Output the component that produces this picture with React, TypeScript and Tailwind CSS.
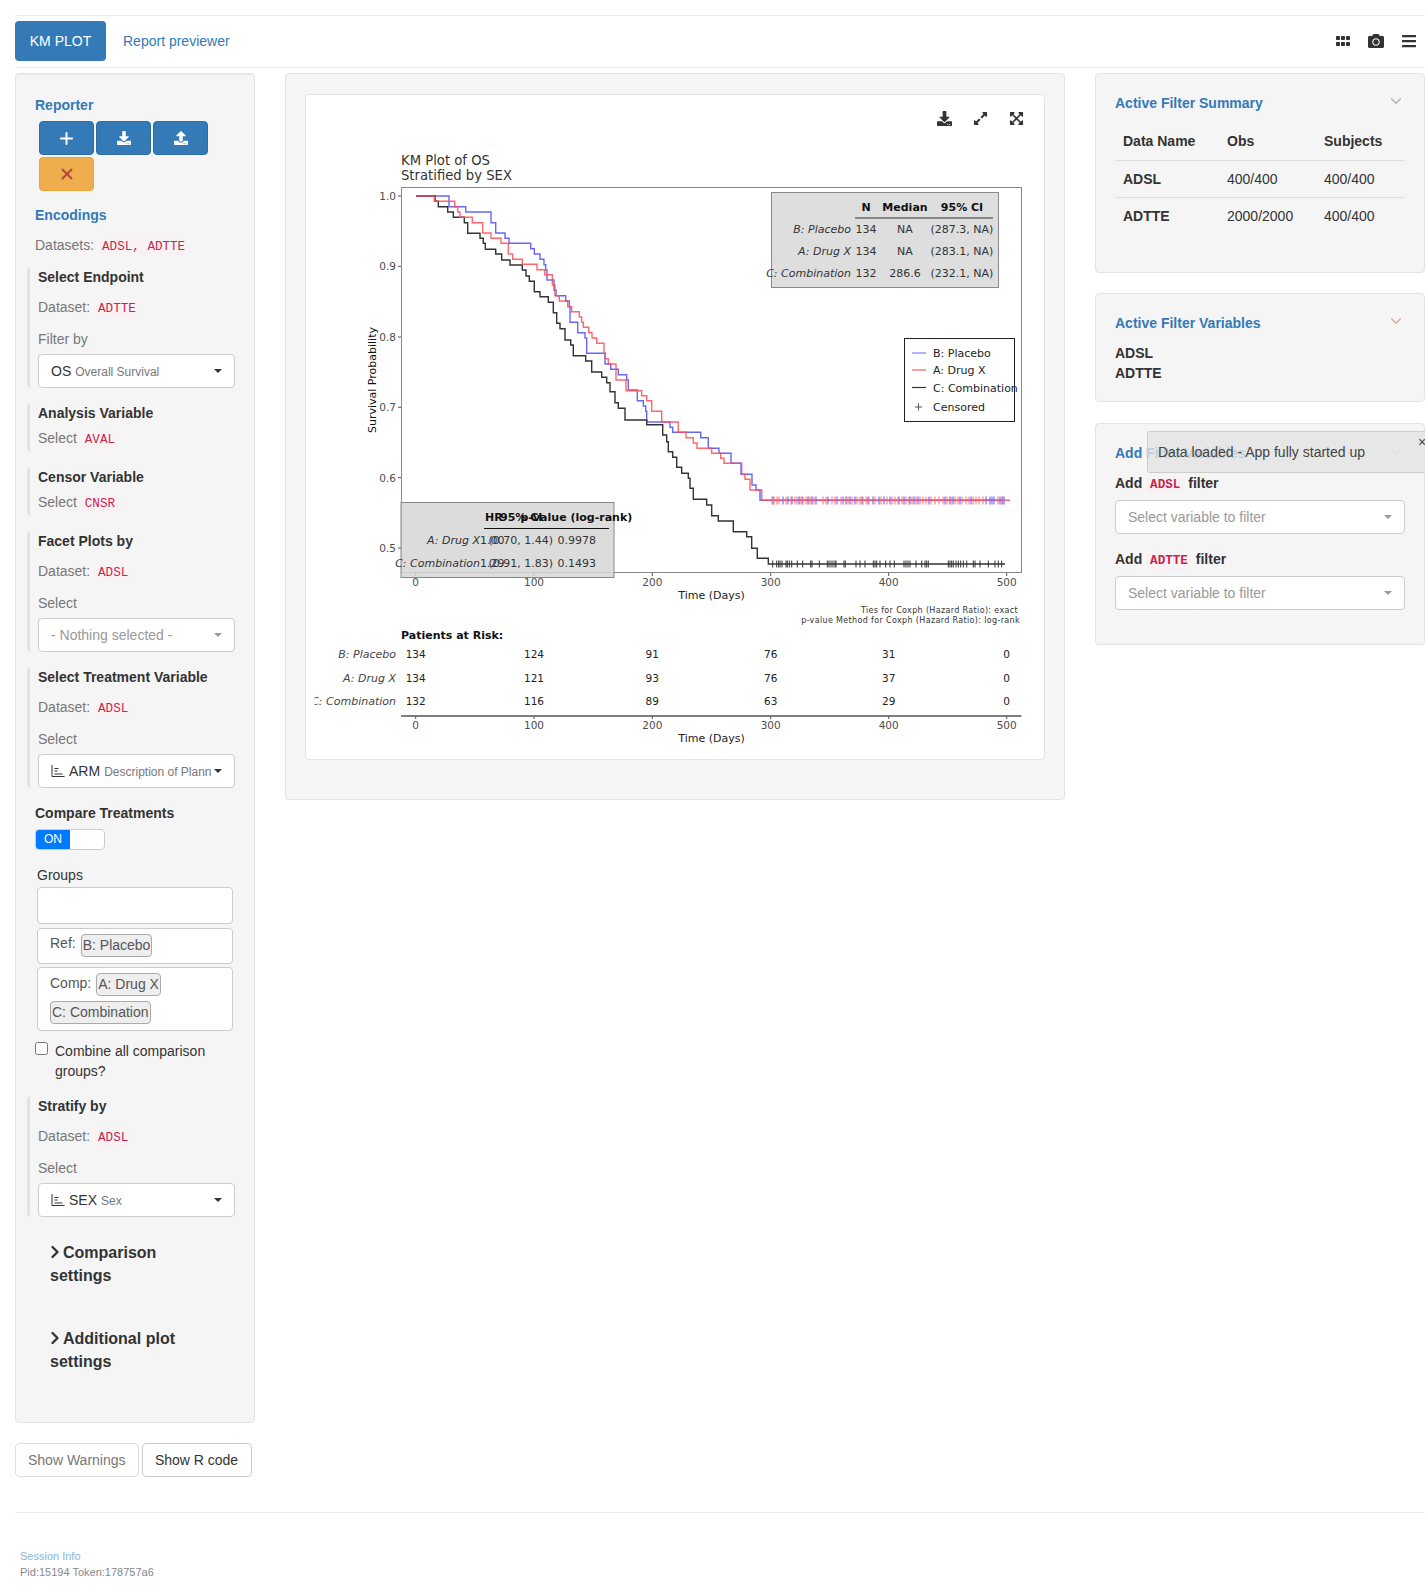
import React from "react";
import { ChevronDown, ChevronRight, Plus, X } from "lucide-react";
import {
  FaBars,
  FaCamera,
  FaDownload,
  FaExpandAlt,
  FaExpandArrowsAlt,
  FaGripHorizontal,
  FaUpload,
} from "react-icons/fa";

const Code = ({ children, bold }: { children: React.ReactNode; bold?: boolean }) => (
  <code
    className={`rounded-[4px] bg-[#f9f2f4] px-[4px] py-[2px] font-['Liberation_Mono',monospace] text-[12.6px] leading-[1] text-[#c7254e] ${
      bold ? "font-bold" : ""
    }`}
  >
    {children}
  </code>
);

const Caret = ({ muted }: { muted?: boolean }) => (
  <span
    className={`h-0 w-0 shrink-0 border-x-4 border-t-4 border-x-transparent ${
      muted ? "border-t-[#999]" : "border-t-[#333]"
    }`}
  />
);

const Select = ({ children, muted }: { children: React.ReactNode; muted?: boolean }) => (
  <div className="flex h-[34px] items-center justify-between rounded-[4px] border border-[#ccc] bg-white pl-[12px] pr-[12px]">
    <div className="flex min-w-0 items-baseline overflow-hidden whitespace-nowrap">{children}</div>
    <Caret muted={muted} />
  </div>
);

const Group = ({ title, children, className }: { title: string; children: React.ReactNode; className?: string }) => (
  <div className={`-ml-2 rounded-l-[4px] border-l-[3px] border-[#e3e3e3] pl-[8px] ${className ?? ""}`}>
    <div className="font-bold">{title}</div>
    {children}
  </div>
);

const Muted = ({ children, className }: { children: React.ReactNode; className?: string }) => (
  <div className={`text-[#777] ${className ?? ""}`}>{children}</div>
);

// axis with three bars, the picker's marker for a factor variable
const VarIcon = () => (
  <svg width="14" height="14" viewBox="0 0 14 14" className="mr-[4px] shrink-0 self-center" fill="none" stroke="#333">
    <path d="M1 1v11.5h12.5" />
    <path d="M3.5 4.5h4M3.5 7h3M3.5 10h8" />
  </svg>
);

const Chip = ({ children }: { children: React.ReactNode }) => (
  <span className="inline-block h-[23px] whitespace-nowrap rounded-[4px] border border-[#aaa] bg-[#eee] px-[1px] leading-[21px] text-[#555]">
    {children}
  </span>
);

const SectionToggle = ({ children, className }: { children: React.ReactNode; className?: string }) => (
  <div className={`ml-[15px] w-[150px] text-[16px] font-bold leading-[23px] ${className ?? ""}`}>
    <ChevronRight className="-ml-[5px] -mr-[2px] inline-block h-[20px] align-[-4px]" size={20} strokeWidth={2.8} />
    {children}
  </div>
);

function Sidebar() {
  return (
    <div>
      <div className="rounded-[4px] border border-[#e3e3e3] bg-[#f5f5f5] pb-[49px] pl-[19px] pr-[19px] pt-[21px] shadow-[inset_0_1px_1px_rgba(0,0,0,0.05)]">
        <div className="font-bold text-[#337ab7]">Reporter</div>
        <div className="ml-1 mt-[6px] flex flex-wrap gap-[2px]">
          <button className="flex h-[34px] w-[55px] items-center justify-center rounded-[4px] border border-[#2e6da4] bg-[#337ab7] text-white">
            <Plus size={19} strokeWidth={2.5} />
          </button>
          <button className="flex h-[34px] w-[55px] items-center justify-center rounded-[4px] border border-[#2e6da4] bg-[#337ab7] text-white">
            <FaDownload className="text-[14px]" />
          </button>
          <button className="flex h-[34px] w-[55px] items-center justify-center rounded-[4px] border border-[#2e6da4] bg-[#337ab7] text-white">
            <FaUpload className="text-[14px]" />
          </button>
          <button className="flex h-[34px] w-[55px] items-center justify-center rounded-[4px] border border-[#eea236] bg-[#f0ad4e] text-[#b0473f]">
            <X size={18} strokeWidth={2.5} />
          </button>
        </div>
        <div className="mt-[14px] font-bold text-[#337ab7]">Encodings</div>
        <Muted className="mt-[10px]">
          Datasets: <Code>ADSL, ADTTE</Code>
        </Muted>

        <Group title="Select Endpoint" className="mt-[12px]">
          <Muted className="mt-[10px]">
            Dataset: <Code>ADTTE</Code>
          </Muted>
          <Muted className="mt-[12px]">Filter by</Muted>
          <div className="mt-[5px]">
            <Select>
              <span>OS</span>
              <span className="ml-[4px] text-[12px] text-[#777]">Overall Survival</span>
            </Select>
          </div>
        </Group>

        <Group title="Analysis Variable" className="mt-[15px] pb-[4px]">
          <Muted className="mt-[5px]">
            Select <Code>AVAL</Code>
          </Muted>
        </Group>

        <Group title="Censor Variable" className="mt-[15px] pb-[4px]">
          <Muted className="mt-[5px]">
            Select <Code>CNSR</Code>
          </Muted>
        </Group>

        <Group title="Facet Plots by" className="mt-[15px]">
          <Muted className="mt-[10px]">
            Dataset: <Code>ADSL</Code>
          </Muted>
          <Muted className="mt-[12px]">Select</Muted>
          <div className="mt-[5px]">
            <Select muted>
              <span className="text-[#999]">- Nothing selected -</span>
            </Select>
          </div>
        </Group>

        <Group title="Select Treatment Variable" className="mt-[15px]">
          <Muted className="mt-[10px]">
            Dataset: <Code>ADSL</Code>
          </Muted>
          <Muted className="mt-[12px]">Select</Muted>
          <div className="mt-[5px]">
            <Select>
              <VarIcon />
              <span>ARM</span>
              <span className="ml-[4px] text-[12px] text-[#777]">Description of Plann</span>
            </Select>
          </div>
        </Group>

        <div className="mt-[15px] font-bold">Compare Treatments</div>
        <div className="mt-[6px] flex h-[21px] w-[70px] overflow-hidden rounded-[4px] border border-[#ccc] bg-white text-[12px] leading-[19px] text-white">
          <span className="w-[34px] bg-[#007bff] text-center">ON</span>
        </div>

        <div className="ml-[2px] mr-[2px] mt-[15px]">
          <div>Groups</div>
          <div className="mt-[2px] h-[37px] rounded-[4px] border border-[#ccc] bg-white" />
          <div className="mt-[4px] flex h-[36px] items-start gap-[5px] rounded-[4px] border border-[#ccc] bg-white pl-[12px] pt-[5px] text-[#555]">
            <span className="leading-[19px]">Ref:</span>
            <Chip>B: Placebo</Chip>
          </div>
          <div className="mt-[3px] h-[64px] rounded-[4px] border border-[#ccc] bg-white pl-[12px] pt-[5px] text-[#555]">
            <div className="flex items-start gap-[5px]">
              <span className="leading-[20px]">Comp:</span>
              <Chip>A: Drug X</Chip>
            </div>
            <div className="mt-[5px]">
              <Chip>C: Combination</Chip>
            </div>
          </div>
        </div>

        <label className="mt-[10px] flex items-start">
          <input type="checkbox" className="mt-[1px] h-[13px] w-[13px] shrink-0" />
          <span className="ml-[7px]">Combine all comparison groups?</span>
        </label>

        <Group title="Stratify by" className="mt-[15px]">
          <Muted className="mt-[10px]">
            Dataset: <Code>ADSL</Code>
          </Muted>
          <Muted className="mt-[12px]">Select</Muted>
          <div className="mt-[5px]">
            <Select>
              <VarIcon />
              <span>SEX</span>
              <span className="ml-[4px] text-[12px] text-[#777]">Sex</span>
            </Select>
          </div>
        </Group>

        <SectionToggle className="mt-[24px]">Comparison settings</SectionToggle>
        <SectionToggle className="mt-[40px]">Additional plot settings</SectionToggle>
      </div>
      <div className="mt-[20px] flex gap-[3px]">
        <button className="h-[34px] rounded-[4px] border border-[#ddd] bg-white px-[12px] text-[#777]">
          Show Warnings
        </button>
        <button className="h-[34px] w-[110px] rounded-[4px] border border-[#ccc] bg-white text-[#333]">
          Show R code
        </button>
      </div>
    </div>
  );
}

type Pt = [number, number];

// step corners in page coordinates: run across to x, then drop to y
const bluePts: Pt[] = [
  [449, 206.7], [465.7, 212], [491, 222.7], [495.7, 233], [505, 238.3], [509, 243.3], [530.7, 248.7],
  [534.3, 254], [540, 259.3], [544, 264.7], [545.7, 270], [547, 280], [554, 290], [556, 295.7],
  [565.7, 301], [569.3, 306.7], [570, 322.3], [577.7, 332.7], [585, 338], [586.7, 353.3], [605, 364],
  [610.7, 369.3], [618.3, 374.7], [626.7, 380], [628.3, 390], [637.3, 400.7], [643.3, 406],
  [645.7, 411.3], [646.7, 422], [670, 427.3], [672.7, 432.3], [700.7, 437.7], [708.3, 448.3],
  [719, 453.3], [731, 463.3], [741, 474.3], [752, 485], [756, 490], [760, 500.3],
];
const redPts: Pt[] = [
  [434.3, 201.3], [454.7, 206.7], [457.7, 212], [460, 217.3], [472.3, 222.7], [482.7, 233],
  [491, 238.3], [501, 243.3], [508.3, 254], [512.7, 259.3], [522.3, 264.3], [537, 269.7],
  [544.7, 274.7], [552.3, 285], [555, 295.7], [559.3, 301], [567.7, 306.7], [571.7, 311.7],
  [579.3, 317], [581.7, 322.3], [583.3, 327.3], [588.7, 332.7], [592, 338], [596.7, 343.3],
  [604, 353.3], [605.3, 358.7], [608.3, 364], [616, 380], [626, 390.7], [641.7, 395.7],
  [646.7, 400.7], [651.7, 411.3], [661.7, 422], [678.3, 432.3], [686, 437.7], [693.3, 443],
  [697, 448.3], [711.7, 453.3], [720.7, 458.3], [724, 463.3], [741.7, 474.3], [745, 479.3],
  [750, 490], [761.7, 500.3],
];
const blackPts: Pt[] = [
  [435, 201.3], [438.3, 206.7], [447.7, 212], [453.3, 217.3], [464.3, 222.7], [467.7, 233.3],
  [480, 238.3], [483.3, 243.3], [485.3, 249.3], [495.7, 254], [501.7, 260], [510, 265],
  [522.3, 270], [526, 276], [529.3, 281.3], [534.3, 291.7], [540, 296.7], [548.3, 302.3],
  [553.3, 312.7], [556.7, 323.3], [560, 328.7], [565, 340], [570.7, 345], [573.3, 355.7],
  [585.7, 361], [591.7, 372], [601.7, 377.3], [606.7, 382.7], [610, 391.7], [615, 402.7],
  [618.3, 408.3], [625, 420], [646.7, 424.7], [662.7, 435], [666.7, 441.7], [668.3, 451.7],
  [672.7, 457.3], [676.7, 467.3], [681.7, 473.3], [688.3, 478.3], [690, 488.3], [693.3, 499.3],
  [706.7, 505], [711.7, 515.7], [718.3, 521], [733.3, 531.7], [746.7, 536.7], [751.7, 548.3],
  [757.3, 558.3], [768.3, 564],
];

const redTicks = [
  772, 774, 777, 779, 786, 791, 795, 797, 800, 803, 806, 809, 811, 814, 823, 826, 832, 835, 841, 847, 849, 852, 857,
  860, 863, 866, 869, 875, 881, 887, 892, 895, 898, 902, 906, 909, 912, 916, 920, 923, 926, 931, 935, 939, 943, 947,
  951, 955, 958, 962, 966, 969, 973, 976, 979, 983, 998, 1003,
];
const blueTicks = [
  773, 783, 788, 792, 799, 802, 808, 812, 816, 828, 837, 843, 846, 850, 855, 862, 868, 873, 879, 884, 890, 899, 904,
  910, 914, 918, 929, 945, 950, 953, 960, 971, 986, 990, 992, 994, 1000, 1002, 1004,
];
const blackTicks = [
  772.7, 776.7, 778.7, 780, 782, 786, 787.3, 789.3, 791.7, 797.3, 802.7, 810.7, 812, 819.3, 827.3, 829, 831, 833, 835,
  836, 844, 845.3, 856, 860, 865, 873.3, 875, 876.7, 880, 885.7, 890, 894.3, 904, 906, 908, 910, 916, 921.7, 925,
  926.7, 928.3, 948.3, 950, 951.7, 953.3, 956, 958.3, 960.7, 963.3, 966.7, 973.3, 975, 980, 988.3, 995, 998.3, 1001.7,
];

const stepPath = (pts: Pt[], endX: number) =>
  `M416 196 ${pts.map(([x, y]) => `H${x} V${y}`).join(" ")} H${endX}`;

const xTicks: [number, string][] = [
  [415.7, "0"],
  [534, "100"],
  [652.3, "200"],
  [770.7, "300"],
  [888.7, "400"],
  [1006.7, "500"],
];
const yTicks: [number, string][] = [
  [196, "1.0"],
  [266.3, "0.9"],
  [337, "0.8"],
  [407.3, "0.7"],
  [477.7, "0.6"],
  [548, "0.5"],
];

const risk = [
  { label: "B: Placebo", y: 654, n: ["134", "124", "91", "76", "31", "0"] },
  { label: "A: Drug X", y: 678, n: ["134", "121", "93", "76", "37", "0"] },
  { label: "C: Combination", y: 701, n: ["132", "116", "89", "63", "29", "0"] },
];

function KmPlot() {
  return (
    <svg
      viewBox="306 145 738 614"
      width={738}
      height={614}
      fontFamily="'DejaVu Sans', sans-serif"
      fontSize={11}
      dominantBaseline="central"
      className="block"
    >
      <defs>
        <clipPath id="risk-clip">
          <rect x={314.5} y={640} width={730} height={110} />
        </clipPath>
      </defs>

      <text x={401} y={160} fontSize={13.2} fill="#333">KM Plot of OS</text>
      <text x={401} y={175} fontSize={13.2} fill="#333">Stratified by SEX</text>

      <rect x={401.5} y={187.5} width={620} height={385} fill="none" stroke="#888" />
      {xTicks.map(([x, t]) => (
        <g key={t}>
          <line x1={x} x2={x} y1={573} y2={576} stroke="#555" />
          <text x={x} y={582} textAnchor="middle" fontSize={10.5} fill="#4d4d4d">{t}</text>
        </g>
      ))}
      {yTicks.map(([y, t]) => (
        <g key={t}>
          <line x1={398} x2={401} y1={y} y2={y} stroke="#555" />
          <text x={396} y={y} textAnchor="end" fontSize={10.5} fill="#4d4d4d">{t}</text>
        </g>
      ))}
      <text x={372.5} y={380} transform="rotate(-90 372.5 380)" textAnchor="middle" fill="#111">
        Survival Probability
      </text>
      <text x={711.5} y={595} textAnchor="middle" fill="#222">Time (Days)</text>
      <text x={1018} y={610} textAnchor="end" fontSize={8} letterSpacing={0.35} fill="#333">Ties for Coxph (Hazard Ratio): exact</text>
      <text x={1020} y={620} textAnchor="end" fontSize={8} letterSpacing={0.35} fill="#333">p-value Method for Coxph (Hazard Ratio): log-rank</text>

      <path d={stepPath(bluePts, 1003)} fill="none" stroke="#4b4bff" strokeWidth={1.4} opacity={0.85} />
      <path d={stepPath(blackPts, 1005)} fill="none" stroke="#333" strokeWidth={1.4} />
      <path d={stepPath(redPts, 1010)} fill="none" stroke="#ff4b55" strokeWidth={1.4} opacity={0.85} />
      {blueTicks.map((x) => (
        <line key={x} x1={x} x2={x} y1={496.5} y2={504.5} stroke="#7070ff" strokeWidth={1.2} />
      ))}
      {redTicks.map((x) => (
        <line key={x} x1={x} x2={x} y1={496.5} y2={504.5} stroke="#ff6a72" strokeWidth={1.2} opacity={0.8} />
      ))}
      {blackTicks.map((x) => (
        <line key={x} x1={x} x2={x} y1={560.5} y2={567.5} stroke="#333" />
      ))}

      {/* median table */}
      <rect x={771.5} y={192.5} width={227} height={95} fill="#dedede" stroke="#888" />
      <g fill="#111" fontWeight="bold">
        <text x={866} y={207} textAnchor="middle">N</text>
        <text x={905} y={207} textAnchor="middle">Median</text>
        <text x={962} y={207} textAnchor="middle">95% CI</text>
      </g>
      <line x1={855} x2={993} y1={218} y2={218} stroke="#333" />
      {[
        [229, "B: Placebo", "134", "NA", "(287.3, NA)"],
        [251, "A: Drug X", "134", "NA", "(283.1, NA)"],
        [273, "C: Combination", "132", "286.6", "(232.1, NA)"],
      ].map(([y, label, n, med, ci]) => (
        <g key={label} fill="#333">
          <text x={851} y={y} textAnchor="end" fontStyle="italic">{label}</text>
          <text x={866} y={y} textAnchor="middle">{n}</text>
          <text x={905} y={y} textAnchor="middle">{med}</text>
          <text x={962} y={y} textAnchor="middle">{ci}</text>
        </g>
      ))}

      {/* legend */}
      <rect x={904.5} y={338.5} width={110} height={83} fill="#fff" stroke="#222" />
      <line x1={912} x2={926} y1={353} y2={353} stroke="#7f7fff" strokeWidth={1.2} />
      <line x1={912} x2={926} y1={370} y2={370} stroke="#ff5a60" strokeWidth={1.2} />
      <line x1={912} x2={926} y1={387.5} y2={387.5} stroke="#333" strokeWidth={1.2} />
      <path d="M918.5 403.5v7M915 407h7" stroke="#555" fill="none" />
      <g fill="#222">
        <text x={933} y={353}>B: Placebo</text>
        <text x={933} y={370}>A: Drug X</text>
        <text x={933} y={388}>C: Combination</text>
        <text x={933} y={407}>Censored</text>
      </g>

      {/* hazard ratio table */}
      <rect x={401} y={502.5} width={213} height={75} fill="#d6d6d6" fillOpacity={0.85} stroke="#888" />
      <g fill="#111" fontWeight="bold">
        <text x={485} y={517}>HR</text>
        <text x={500} y={517}>95% CI</text>
        <text x={520.5} y={517}>p-value (log-rank)</text>
      </g>
      <line x1={484} x2={609} y1={528.5} y2={528.5} stroke="#111" />
      {[
        [540, "A: Drug X", "1.00", "(0.70, 1.44)", "0.9978"],
        [563, "C: Combination", "1.29", "(0.91, 1.83)", "0.1493"],
      ].map(([y, label, hr, ci, p]) => (
        <g key={label} fill="#333">
          <text x={480} y={y} textAnchor="end" fontStyle="italic">{label}</text>
          <text x={480} y={y}>{hr}</text>
          <text x={553} y={y} textAnchor="end">{ci}</text>
          <text x={557.5} y={y}>{p}</text>
        </g>
      ))}

      {/* patients at risk */}
      <text x={401} y={635} fontWeight="bold" fill="#111">Patients at Risk:</text>
      <g clipPath="url(#risk-clip)">
        {risk.map((row) => (
          <g key={row.label} fill="#222">
            <text x={396} y={row.y} textAnchor="end" fontStyle="italic" fill="#444">{row.label}</text>
            {row.n.map((v, i) => (
              <text key={i} x={xTicks[i][0]} y={row.y} textAnchor="middle" fontSize={10.5}>{v}</text>
            ))}
          </g>
        ))}
      </g>
      <line x1={401} x2={1021.5} y1={716} y2={716} stroke="#555" strokeWidth={1.4} />
      {xTicks.map(([x, t]) => (
        <g key={t}>
          <line x1={x} x2={x} y1={716} y2={719} stroke="#555" />
          <text x={x} y={725} textAnchor="middle" fontSize={10.5} fill="#4d4d4d">{t}</text>
        </g>
      ))}
      <text x={711.5} y={738} textAnchor="middle" fill="#222">Time (Days)</text>
    </svg>
  );
}

function RightWell({
  title,
  chevron,
  className,
  children,
}: {
  title: string;
  chevron: string;
  className?: string;
  children: React.ReactNode;
}) {
  return (
    <div className={`rounded-[4px] border border-[#e3e3e3] bg-[#f5f5f5] pl-[19px] pr-[19px] pt-[19px] ${className ?? ""}`}>
      <div className="flex items-start justify-between">
        <div className="font-bold text-[#337ab7]">{title}</div>
        <ChevronDown className={`-mt-px ${chevron}`} size={18} strokeWidth={1.5} />
      </div>
      {children}
    </div>
  );
}

function RightColumn() {
  return (
    <div className="relative w-[330px] shrink-0">
      <RightWell title="Active Filter Summary" chevron="text-[#aaa]" className="h-[200px]">
        <table className="mt-[10px] w-[290px] border-collapse text-left">
          <thead>
            <tr className="h-[37px] border-b border-[#ddd] font-bold">
              <th className="w-[104px] pl-[8px]">Data Name</th>
              <th className="w-[97px] pl-[8px]">Obs</th>
              <th className="pl-[8px]">Subjects</th>
            </tr>
          </thead>
          <tbody>
            <tr className="h-[37px] border-b border-[#ddd]">
              <td className="pl-[8px] font-bold">ADSL</td>
              <td className="pl-[8px]">400/400</td>
              <td className="pl-[8px]">400/400</td>
            </tr>
            <tr className="h-[37px]">
              <td className="pl-[8px] font-bold">ADTTE</td>
              <td className="pl-[8px]">2000/2000</td>
              <td className="pl-[8px]">400/400</td>
            </tr>
          </tbody>
        </table>
      </RightWell>

      <RightWell title="Active Filter Variables" chevron="text-[#d9a0a0]" className="mt-[20px] h-[109px]">
        <div className="mt-[10px] font-bold">ADSL</div>
        <div className="font-bold">ADTTE</div>
      </RightWell>

      <RightWell title="Add Filter Variables" chevron="text-[#ccc]" className="mt-[21px] h-[222px]">
        <div className="mt-[10px] font-bold">
          Add <Code bold>ADSL</Code> filter
        </div>
        <div className="mt-[7px]">
          <Select muted>
            <span className="text-[#999]">Select variable to filter</span>
          </Select>
        </div>
        <div className="mt-[15px] font-bold">
          Add <Code bold>ADTTE</Code> filter
        </div>
        <div className="mt-[7px]">
          <Select muted>
            <span className="text-[#999]">Select variable to filter</span>
          </Select>
        </div>
      </RightWell>

      {/* notification toast sits over the third well */}
      <div className="absolute left-[52px] top-[358px] h-[42px] w-[290px] rounded-[3px] border border-[#ccc] bg-[#e3e3e3]/80 pl-[10px] leading-[40px] text-[#444]">
        Data loaded - App fully started up
        <span className="absolute left-[270px] top-[-10px] text-[14px] text-[#444]">×</span>
      </div>
    </div>
  );
}

export default function App() {
  return (
    <div className="h-[1585px] w-[1425px] overflow-hidden pl-[15px] pt-[15px] font-['Liberation_Sans',Arial,sans-serif] text-[14px] leading-[20px] text-[#333]">
      <div className="border-t border-[#eee] pt-[5px]">
        <div className="flex h-[47px] items-start border-b border-[#eee]">
          <div className="flex h-[40px] w-[91px] items-center justify-center rounded-[4px] bg-[#337ab7] text-white">
            KM PLOT
          </div>
          <div className="ml-[17px] flex h-[40px] items-center text-[#337ab7]">Report previewer</div>
          <div className="ml-auto flex h-[40px] items-center gap-[17px] pr-[8px] text-[#333]">
            <FaGripHorizontal className="text-[16px]" />
            <FaCamera className="text-[16px]" />
            <FaBars className="text-[16px]" />
          </div>
        </div>
      </div>

      <div className="mt-[5px] flex items-start gap-[30px]">
        <div className="w-[240px] shrink-0">
          <Sidebar />
        </div>
        <div className="w-[780px] shrink-0 rounded-[4px] border border-[#e3e3e3] bg-[#f5f5f5] pb-[39px] pl-[19px] pr-[19px] pt-[20px]">
          <div className="h-[666px] w-[740px] rounded-[4px] border border-[#e3e3e3] bg-white">
            <div className="flex h-[50px] items-start justify-end gap-[21px] pr-[20px] pt-[16px] text-[#333]">
              <FaDownload className="text-[15px]" />
              <FaExpandAlt className="text-[15px]" />
              <FaExpandArrowsAlt className="text-[15px]" />
            </div>
            <KmPlot />
          </div>
        </div>
        <RightColumn />
      </div>

      <div className="mt-[35px] border-t border-[#eee] pl-[5px] pt-[35px] text-[11px] leading-[16px]">
        <div className="text-[#8ab4d8]">Session Info</div>
        <div className="text-[#888]">Pid:15194 Token:178757a6</div>
      </div>
    </div>
  );
}
